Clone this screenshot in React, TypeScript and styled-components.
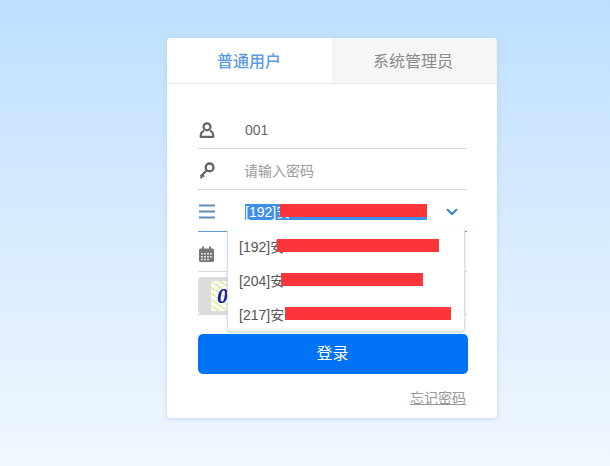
import React, { FC } from 'react';
import styled, { createGlobalStyle } from 'styled-components';

const GlobalStyle = createGlobalStyle`
html, body {
    margin: 0;
    height: 100%;
    overflow: hidden;
}
body {
    font-family: "Liberation Sans", "Noto Sans CJK SC", sans-serif;
    background: linear-gradient(180deg, #bddfff 0%, #d6eaff 45%, #f0f7ff 100%);
}
`;

const Page = styled.div`
width: 610px;
height: 466px;
padding: 38px 0 0 167px;
box-sizing: border-box;
`;

const Card = styled.div`
width: 330px;
height: 380px;
background: #fff;
border-radius: 4px;
box-shadow: 0 1px 4px rgba(150, 190, 230, 0.5);
`;

const Tabs = styled.div`
display: flex;
height: 46px;
border-bottom: 1px solid #e9e9e9;
box-sizing: border-box;
`;

const Tab = styled.div<{ $active?: boolean }>`
flex: 0 0 165px;
box-sizing: border-box;
display: flex;
align-items: center;
justify-content: center;
padding: 0 ${p => (p.$active ? 1 : 3)}px 2px 0;
font-size: 16px;
font-weight: ${p => (p.$active ? 500 : 400)};
color: ${p => (p.$active ? '#5b9bdf' : '#8a8a8a')};
background: ${p => (p.$active ? '#fff' : '#f6f6f6')};
border-radius: ${p => (p.$active ? '4px 0 0 0' : '0 4px 0 0')};
`;

const Form = styled.div`
position: relative;
padding: 25px 30px 0 31px;
`;

const Row = styled.div<{ $height: number; $focused?: boolean }>`
display: flex;
align-items: center;
height: ${p => p.$height}px;
padding-top: 2px;
box-sizing: border-box;
border-bottom: 1px solid ${p => (p.$focused ? '#5b9bd5' : '#d9d9d9')};
`;

const IconSlot = styled.div<{ $drop?: number }>`
width: 47px;
flex: none;
display: flex;
align-items: center;
padding: ${p => p.$drop || 0}px 0 0 1px;
box-sizing: border-box;
`;

const Value = styled.div<{ $placeholder?: boolean }>`
margin-left: ${p => (p.$placeholder ? -1 : 0)}px;
font-size: 14px;
color: ${p => (p.$placeholder ? '#999' : '#666')};
`;

const SelectedText = styled.div`
position: relative;
flex: 1;
height: 16px;
font-size: 14px;
line-height: 16px;
color: #fff;
`;

const Highlight = styled.span`
display: block;
width: 182px;
height: 16px;
background: #3f8fea;
`;

const SelectedLabel = styled.span`
position: absolute;
left: 0;
top: 0;
`;

const Redaction = styled.span<{ $left: number; $width: number; $top: number }>`
position: absolute;
left: ${p => p.$left}px;
top: ${p => p.$top}px;
width: ${p => p.$width}px;
height: 13px;
background: #fb3539;
`;

const Chevron = styled.div`
flex: none;
width: 21px;
display: flex;
align-items: center;
`;

const CaptchaBox = styled.div`
align-self: flex-end;
width: 90px;
height: 37px;
background: #dcdcdc;
border-radius: 4px;
display: flex;
align-items: center;
padding-left: 13px;
box-sizing: border-box;
`;

const CaptchaImage = styled.div`
width: 18px;
height: 30px;
padding-left: 6px;
background:
    repeating-linear-gradient(35deg, transparent 0 4px, #cdea8f 4px 5px),
    #fbfdf2;
display: flex;
align-items: center;
font-family: "Liberation Serif", serif;
font-size: 22px;
font-weight: 700;
font-style: italic;
color: #12129a;
`;

const Dropdown = styled.div`
position: absolute;
left: 60px;
top: 146px;
width: 238px;
height: 102px;
box-sizing: border-box;
background: #fff;
border: 1px solid #dcdcdc;
border-top: none;
border-radius: 0 0 4px 4px;
box-shadow: 0 1px 3px rgba(120, 170, 220, 0.4);
`;

const Option = styled.div`
position: relative;
height: 34px;
padding-left: 11px;
font-size: 14px;
line-height: 34px;
color: #555;
`;

const LoginButton = styled.button`
display: block;
width: 270px;
height: 40px;
margin-top: 19px;
padding: 0 1px 5px 0;
border: none;
border-radius: 5px;
background: #0072f5;
color: #fff;
font-family: inherit;
font-size: 16px;
`;

const ForgotRow = styled.div`
display: flex;
justify-content: flex-end;
margin-top: 15px;
padding-right: 1px;
`;

const ForgotLink = styled.a`
font-size: 14px;
line-height: 18px;
color: #999;
text-decoration: underline;
`;

const Icon = styled.svg`
display: block;
`;

const UserIcon: FC = () => (
    <Icon width="16" height="16" viewBox="0 0 16 16" fill="none" stroke="#666" strokeWidth="2.2">
        <circle cx="8" cy="4.8" r="3.5" />
        <path d="M5 8.8C2.6 9.6 1.6 11.4 1.6 14.8h12.8c0-3.4-1-5.2-3.4-6" strokeLinejoin="round" />
    </Icon>
);

const KeyIcon: FC = () => (
    <Icon width="16" height="17" viewBox="0 0 16 17" fill="none" stroke="#666">
        <circle cx="10.6" cy="5.4" r="3.9" strokeWidth="2.4" />
        <path d="M7.8 8.2 1.6 14.6M3.2 13l1.8 1.8M1.6 14.6l1.4 1.4" strokeWidth="2.2" />
    </Icon>
);

const ListIcon: FC = () => (
    <Icon width="16" height="15" viewBox="0 0 16 15" stroke="#5a8db8" strokeWidth="2">
        <path d="M0 1.5h16M0 7.5h16M0 13.5h16" />
    </Icon>
);

const CalendarIcon: FC = () => (
    <Icon width="15" height="16" viewBox="0 0 15 16">
        <path d="M0 4a1.5 1.5 0 0 1 1.5-1.5h12A1.5 1.5 0 0 1 15 4v10.5a1.5 1.5 0 0 1-1.5 1.5h-12A1.5 1.5 0 0 1 0 14.5z" fill="#777" />
        <path d="M3 0.5h2v4H3zM10 0.5h2v4h-2z" fill="#777" />
        <path d="M2 7h2v1.6H2zM5 7h2v1.6H5zM8 7h2v1.6H8zM11 7h2v1.6h-2zM2 10h2v1.6H2zM5 10h2v1.6H5zM8 10h2v1.6H8zM11 10h2v1.6h-2zM2 12.8h2v1.4H2zM5 12.8h2v1.4H5zM8 12.8h2v1.4H8z" fill="#ddd" />
    </Icon>
);

const ChevronIcon: FC = () => (
    <Icon width="12" height="8" viewBox="0 0 12 8" fill="none" stroke="#3d85c6" strokeWidth="2.2">
        <path d="M1 1.2 6 6l5-4.8" />
    </Icon>
);

const App: FC = () => {
    return (
        <Page>
            <GlobalStyle />
            <Card>
                <Tabs>
                    <Tab $active>普通用户</Tab>
                    <Tab>系统管理员</Tab>
                </Tabs>
                <Form>
                    <Row $height={40}>
                        <IconSlot><UserIcon /></IconSlot>
                        <Value>001</Value>
                    </Row>
                    <Row $height={41}>
                        <IconSlot><KeyIcon /></IconSlot>
                        <Value $placeholder>请输入密码</Value>
                    </Row>
                    <Row $height={42} $focused>
                        <IconSlot><ListIcon /></IconSlot>
                        <SelectedText>
                            <Highlight />
                            <SelectedLabel>[192]安</SelectedLabel>
                            <Redaction $left={35} $top={0} $width={147} />
                        </SelectedText>
                        <Chevron><ChevronIcon /></Chevron>
                    </Row>
                    <Row $height={40}>
                        <IconSlot $drop={2}><CalendarIcon /></IconSlot>
                    </Row>
                    <Row $height={43}>
                        <CaptchaBox>
                            <CaptchaImage>0</CaptchaImage>
                        </CaptchaBox>
                    </Row>
                    <Dropdown>
                        <Option>
                            [192]安
                            <Redaction $left={49} $top={9} $width={162} />
                        </Option>
                        <Option>
                            [204]安
                            <Redaction $left={53} $top={9} $width={142} />
                        </Option>
                        <Option>
                            [217]安
                            <Redaction $left={57} $top={9} $width={166} />
                        </Option>
                    </Dropdown>
                    <LoginButton>登录</LoginButton>
                    <ForgotRow>
                        <ForgotLink>忘记密码</ForgotLink>
                    </ForgotRow>
                </Form>
            </Card>
        </Page>
    );
};

export default App;
